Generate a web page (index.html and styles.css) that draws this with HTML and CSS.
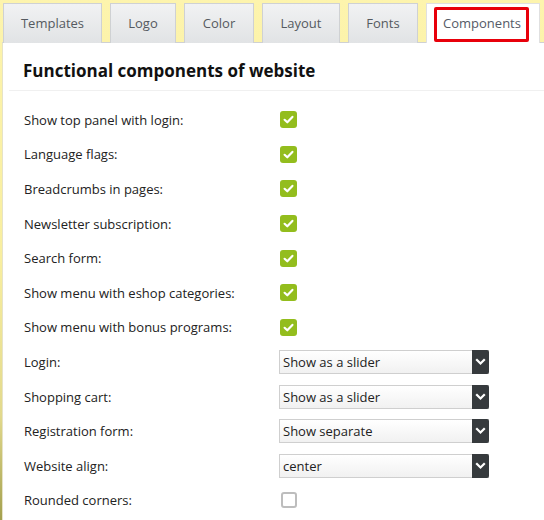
FILE: index.html
```html
<!DOCTYPE html>
<html>
<head>
<meta charset="utf-8">
<link rel="stylesheet" href="styles.css">
</head>
<body>
<div class="page">
  <div class="tabs">
    <div class="tab t-templates">Templates</div>
    <div class="tab t-logo">Logo</div>
    <div class="tab t-color">Color</div>
    <div class="tab t-layout">Layout</div>
    <div class="tab t-fonts">Fonts</div>
    <div class="tab active t-components">Components</div>
  </div>
  <div class="panel">
    <h2 class="title">Functional components of website</h2>
    <div class="rows">
      <div class="row"><span class="label">Show top panel with login:</span><span class="check on"><svg viewBox="0 0 17 17"><path d="M4.6 8.8 L7.3 11.3 L12.4 5.9" /></svg></span></div>
      <div class="row"><span class="label">Language flags:</span><span class="check on"><svg viewBox="0 0 17 17"><path d="M4.6 8.8 L7.3 11.3 L12.4 5.9" /></svg></span></div>
      <div class="row"><span class="label">Breadcrumbs in pages:</span><span class="check on"><svg viewBox="0 0 17 17"><path d="M4.6 8.8 L7.3 11.3 L12.4 5.9" /></svg></span></div>
      <div class="row"><span class="label">Newsletter subscription:</span><span class="check on"><svg viewBox="0 0 17 17"><path d="M4.6 8.8 L7.3 11.3 L12.4 5.9" /></svg></span></div>
      <div class="row"><span class="label">Search form:</span><span class="check on"><svg viewBox="0 0 17 17"><path d="M4.6 8.8 L7.3 11.3 L12.4 5.9" /></svg></span></div>
      <div class="row"><span class="label">Show menu with eshop categories:</span><span class="check on"><svg viewBox="0 0 17 17"><path d="M4.6 8.8 L7.3 11.3 L12.4 5.9" /></svg></span></div>
      <div class="row"><span class="label">Show menu with bonus programs:</span><span class="check on"><svg viewBox="0 0 17 17"><path d="M4.6 8.8 L7.3 11.3 L12.4 5.9" /></svg></span></div>
      <div class="row"><span class="label">Login:</span><span class="select"><span class="value">Show as a slider</span><span class="arrow"><svg viewBox="0 0 17 24"><path d="M5 10 L8.5 13.5 L12 10" /></svg></span></span></div>
      <div class="row"><span class="label">Shopping cart:</span><span class="select"><span class="value">Show as a slider</span><span class="arrow"><svg viewBox="0 0 17 24"><path d="M5 10 L8.5 13.5 L12 10" /></svg></span></span></div>
      <div class="row"><span class="label">Registration form:</span><span class="select"><span class="value">Show separate</span><span class="arrow"><svg viewBox="0 0 17 24"><path d="M5 10 L8.5 13.5 L12 10" /></svg></span></span></div>
      <div class="row"><span class="label">Website align:</span><span class="select"><span class="value">center</span><span class="arrow"><svg viewBox="0 0 17 24"><path d="M5 10 L8.5 13.5 L12 10" /></svg></span></span></div>
      <div class="row"><span class="label">Rounded corners:</span><span class="check off"></span></div>
    </div>
  </div>
</div>
</body>
</html>
```
FILE: styles.css
```css
html, body {
  margin: 0;
  padding: 0;
}
body {
  width: 544px;
  height: 520px;
  overflow: hidden;
  font-family: "Open Sans", "Liberation Sans", sans-serif;
  background: linear-gradient(to bottom, #fdf4ad 0%, #f8ee9f 50%, #e2d98c 80%, #a3a04e 100%);
}
.page {
  padding: 3px 0 0 2px;
  height: 530px;
  box-sizing: border-box;
  display: flex;
  flex-direction: column;
}
.tabs {
  display: flex;
  gap: 8px;
  padding-left: 1px;
  height: 39px;
  position: relative;
  z-index: 2;
}
.tab {
  box-sizing: border-box;
  height: 40px;
  padding: 0;
  border: 1px solid #cfd1d3;
  border-bottom: none;
  background: linear-gradient(to bottom, #f1f2f3, #e1e3e5);
  color: #555a60;
  font-size: 13px;
  line-height: 38px;
  white-space: nowrap;
  text-align: center;
  flex: none;
}
.t-templates { width: 99px; }
.t-logo { width: 66px; }
.t-color { width: 70px; }
.t-layout { width: 78px; }
.t-fonts { width: 70px; }
.t-components { width: 114px; }
.tab.active {
  position: relative;
  background: #fff;
  border-color: #e0e0e0;
  color: #555a66;
  text-indent: -2px;
}
.tab.active::after {
  content: "";
  position: absolute;
  left: 7px;
  right: 10px;
  top: 3px;
  bottom: 1px;
  border: 3px solid #e8000b;
  border-radius: 2px;
}
.panel {
  flex: 1;
  background: #fff;
  border-top: 1px solid #cfd1d3;
  border-left: 1px solid #e6e3c8;
  position: relative;
  z-index: 1;
}
.title {
  margin: 0 0 0 6px;
  padding: 16px 0 7px 14px;
  font-size: 17px;
  line-height: 24px;
  font-weight: bold;
  color: #111;
  border-bottom: 1px solid #f0f0f0;
}
.rows {
  padding: 11.5px 0 0 21px;
}
.row {
  height: 34.6px;
  display: flex;
  align-items: center;
}
.label {
  width: 256px;
  font-size: 13px;
  color: #222;
}
.check {
  box-sizing: border-box;
  width: 17px;
  height: 17px;
  border-radius: 3px;
  display: block;
}
.check.on {
  background: #93bd1d;
}
.check.on svg {
  width: 17px;
  height: 17px;
  display: block;
}
.check.on path {
  fill: none;
  stroke: #fff;
  stroke-width: 2.2;
  stroke-linecap: round;
  stroke-linejoin: round;
}
.check.off {
  border: 2px solid #bdbdbd;
  background: #fff;
  margin-left: 1px;
  width: 16px;
  height: 16px;
}
.select {
  box-sizing: border-box;
  margin-left: -1px;
  width: 210px;
  height: 24px;
  border: 1px solid #cfcfcf;
  border-right: none;
  background: linear-gradient(to bottom, #ffffff, #f1f1f1);
  display: flex;
  align-items: stretch;
}
.select .value {
  flex: 1;
  padding-left: 3px;
  font-size: 13px;
  line-height: 22px;
  color: #222;
}
.select .arrow {
  width: 17px;
  margin-top: -1px;
  margin-bottom: -1px;
  background: #363a3d;
  border-radius: 0 2px 2px 0;
  display: block;
}
.select .arrow svg {
  width: 17px;
  height: 24px;
  display: block;
}
.select .arrow path {
  fill: none;
  stroke: #fff;
  stroke-width: 2.2;
  stroke-linecap: square;
}
```
